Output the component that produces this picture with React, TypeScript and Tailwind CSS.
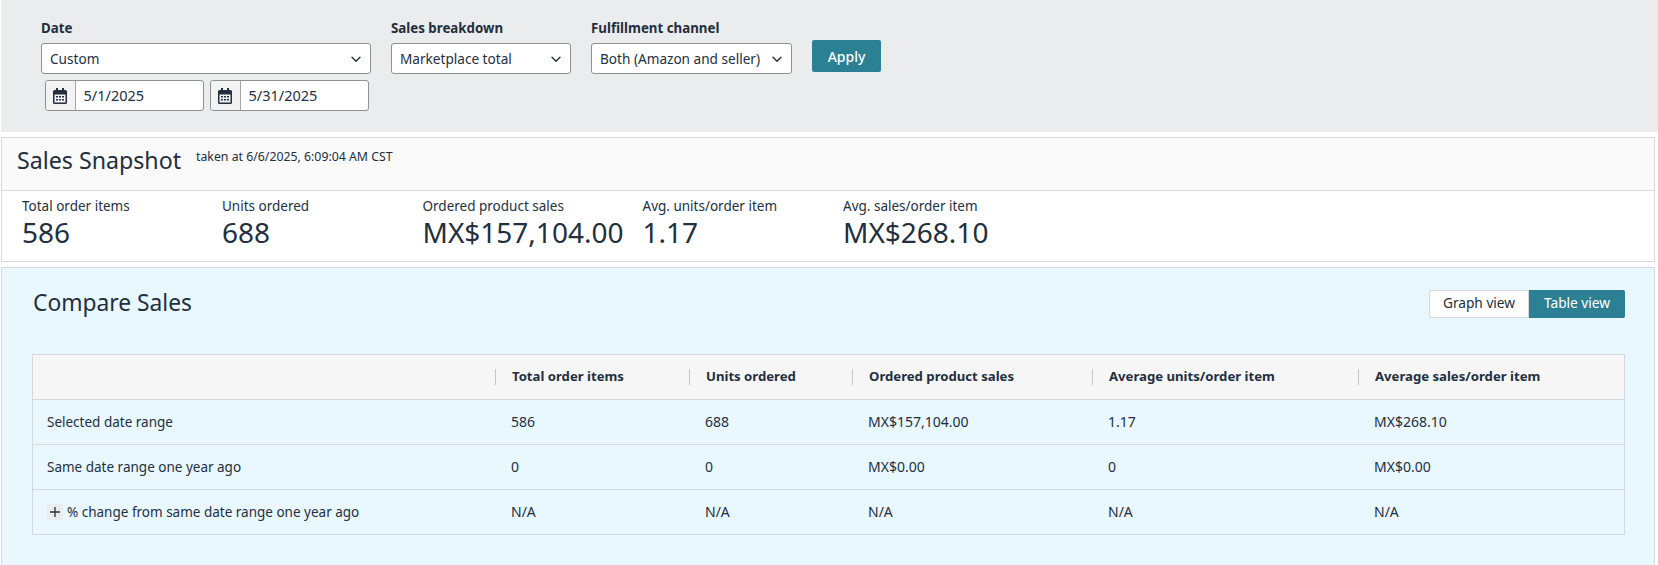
import React from "react";

const Chevron = () => (
  <svg width="10" height="7" viewBox="0 0 10 7" fill="none" stroke="#232f3e" strokeWidth="1.4" strokeLinecap="round" strokeLinejoin="round">
    <path d="M1 1.2 5 5.2l4-4" />
  </svg>
);

const Calendar = () => (
  <svg width="14" height="16" viewBox="0 0 14 16">
    <path fill="#232f3e" fillRule="evenodd" d="M3 0h2v2h4V0h2v2h1.5A1.5 1.5 0 0 1 14 3.500v11a1.500 1.500 0 0 1-1.500 1.500h-11A1.500 1.500 0 0 1 0 14.500v-11A1.500 1.500 0 0 1 1.500 2H3V0ZM1.500 6.500v8h11v-8h-11Z" />
    <path fill="#232f3e" d="M3 8h2v1.500H3zM6 8h2v1.500H6zM9 8h2v1.500H9zM3 11h2v1.500H3zM6 11h2v1.500H6zM9 11h2v1.500H9z" />
  </svg>
);

const Select = ({ label, value, w, gap }: { label: string; value: string; w: string; gap: string }) => (
  <div className={`flex flex-col ${w} ${gap}`}>
    <div className="text-[13.3px] leading-[20px] font-bold whitespace-nowrap">{label}</div>
    <div className="mt-[5px] h-[31px] flex items-center justify-between pl-[8px] pr-[9px] pt-px bg-white border border-[#8d9096] rounded-[3px] text-[13.6px] whitespace-nowrap">
      <span>{value}</span>
      <Chevron />
    </div>
  </div>
);

const DateInput = ({ value }: { value: string }) => (
  <div className="w-[159px] h-[31px] flex bg-white border border-[#8d9096] rounded-[3px] overflow-hidden">
    <div className="w-[30px] shrink-0 flex items-center justify-center bg-[#f3f3f3] border-r border-[#a6a6a6]">
      <Calendar />
    </div>
    <div className="flex items-center pl-[8px] text-[14.5px]">{value}</div>
  </div>
);

const stats = [
  { label: "Total order items", value: "586", w: "w-[200px]" },
  { label: "Units ordered", value: "688", w: "w-[200.5px]" },
  { label: "Ordered product sales", value: "MX$157,104.00", w: "w-[220px]" },
  { label: "Avg. units/order item", value: "1.17", w: "w-[200.5px]" },
  { label: "Avg. sales/order item", value: "MX$268.10", w: "w-[200px]" },
];

const cols = "grid grid-cols-[462px_194px_163px_240px_266px_1fr]";

const headers = ["Total order items", "Units ordered", "Ordered product sales", "Average units/order item", "Average sales/order item"];

const rows = [
  { name: "Selected date range", cells: ["586", "688", "MX$157,104.00", "1.17", "MX$268.10"] },
  { name: "Same date range one year ago", cells: ["0", "0", "MX$0.00", "0", "MX$0.00"] },
  { name: "% change from same date range one year ago", cells: ["N/A", "N/A", "N/A", "N/A", "N/A"], plus: true },
];

export default function App() {
  return (
    <div className="h-[565px] w-[1658px] overflow-hidden bg-white text-[#232f3e] flex flex-col pl-px pr-[3px] font-['Noto_Sans',sans-serif]">
      <div className="h-[132px] shrink-0 bg-[#ebecee] -mr-[3px] pl-[40px] pt-[18px] flex items-start">
        <div className="flex flex-col w-[330px] mr-[20px]">
          <div className="text-[13.3px] leading-[20px] font-bold">Date</div>
          <div className="mt-[5px] h-[31px] flex items-center justify-between pl-[8px] pr-[9px] pt-px bg-white border border-[#8d9096] rounded-[3px] text-[13.6px]">
            <span>Custom</span>
            <Chevron />
          </div>
          <div className="mt-[6px] ml-[3.5px] flex gap-[6px]">
            <DateInput value="5/1/2025" />
            <DateInput value="5/31/2025" />
          </div>
        </div>
        <Select label="Sales breakdown" value="Marketplace total" w="w-[180px]" gap="mr-[20px]" />
        <Select label="Fulfillment channel" value="Both (Amazon and seller)" w="w-[201px]" gap="mr-[20px]" />
        <button className="mt-[22px] w-[69px] h-[32px] bg-[#2b8094] text-white text-[14px] font-medium rounded-[2px]">Apply</button>
      </div>

      <div className="mt-[5px] h-[125px] shrink-0 border border-[#d9d9d9] flex flex-col">
        <div className="h-[53px] shrink-0 bg-[#fafafa] border-b border-[#d9d9d9] flex items-start pl-[15px]">
          <div className="text-[23.2px] leading-[30px] mt-[7px] w-[179px] whitespace-nowrap">Sales Snapshot</div>
          <div className="text-[12.3px] leading-[18px] mt-[10px] whitespace-nowrap">taken at 6/6/2025, 6:09:04 AM CST</div>
        </div>
        <div className="flex pl-[20px] pt-[6px]">
          {stats.map((s) => (
            <div key={s.label} className={`${s.w} shrink-0`}>
              <div className="text-[13.5px] leading-[18px] whitespace-nowrap">{s.label}</div>
              <div className="text-[28px] leading-[34px] whitespace-nowrap">{s.value}</div>
            </div>
          ))}
        </div>
      </div>

      <div className="mt-[5px] h-[320px] shrink-0 bg-[#e9f7ff] border border-[#d5d9dd] pl-[30px] pr-[29px] pt-[21px]">
        <div className="flex items-center justify-between h-[29px]">
          <div className="text-[22.8px] leading-[26px] -mt-[2px] pl-px">Compare Sales</div>
          <div className="flex text-[13.7px] h-[28px]">
            <div className="w-[100px] bg-white border border-[#d5d9dd] rounded-l-[2px] flex items-center justify-center">Graph view</div>
            <div className="w-[96px] bg-[#2b8094] text-white rounded-r-[2px] flex items-center justify-center">Table view</div>
          </div>
        </div>
        <div className="mt-[36px] border border-[#d5d9dd] text-[13.5px]">
          <div className={`${cols} h-[45px] bg-[#f6f6f6] border-b border-[#d5d9dd] font-bold text-[13.15px] items-center`}>
            <div />
            {headers.map((h) => (
              <div key={h} className="h-[16px] border-l border-[#c4c8cc] pl-[16px] flex items-center whitespace-nowrap">{h}</div>
            ))}
          </div>
          {rows.map((r, i) => (
            <div key={r.name} className={`${cols} items-center ${i < 2 ? "h-[45px] border-b border-[#d5d9dd]" : "h-[44px]"}`}>
              <div className="pl-[14px] flex items-center whitespace-nowrap">
                {r.plus && (
                  <span className="w-[16px] h-[16px] mr-[4px] bg-[#eaeded] flex items-center justify-center">
                    <svg width="10" height="10" viewBox="0 0 10 10" stroke="#232f3e" strokeWidth="1.3"><path d="M5 0v10M0 5h10" /></svg>
                  </span>
                )}
                {r.name}
              </div>
              {r.cells.map((c, j) => (
                <div key={j} className="pl-[16px] pb-px text-[14px] leading-[20px] whitespace-nowrap">{c}</div>
              ))}
            </div>
          ))}
        </div>
      </div>
    </div>
  );
}
